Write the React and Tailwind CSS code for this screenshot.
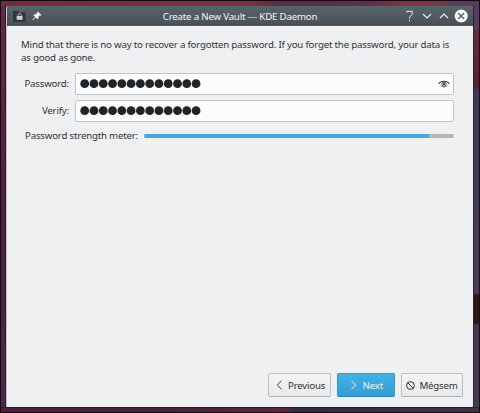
import React from 'react';

const PASSWORD_LENGTH = 13;

const PasswordDots = () => (
  <svg width="122" height="10" viewBox="0 0 122 10" fill="#202426">
    {Array.from({ length: PASSWORD_LENGTH }).map((_, i) => (
      <circle key={i} cx={4.7 + i * 9.28} cy="4.7" r="4.4" />
    ))}
  </svg>
);

const VaultIcon = () => (
  <svg width="13" height="13" viewBox="0 0 13 13">
    <path d="M0 1h5l1 1.5h6.5V12H0z" fill="#30363a" />
    <path d="M.5 1.5h5M6 3.5h5.5" stroke="#3f282e" strokeWidth="1" />
    <path d="M5 6V5a1.6 1.6 0 0 1 3.2 0v1" fill="none" stroke="#a9adaf" strokeWidth="1" />
    <rect x="3.7" y="6" width="5.8" height="3.8" fill="#d0d2d3" />
  </svg>
);

const PinIcon = () => (
  <svg width="10" height="10" viewBox="0 0 10 10">
    <path d="M5.8.7 9.2 4l-.9.4-.7-.1-1.4 1.5.1 1.6-.8.7-1.9-1.9L.7 9.1l-.2-.2 2.8-3L1.6 4.2l.7-.8 1.7.1 1.4-1.4-.1-.7z" fill="#fcfcfc" stroke="#fcfcfc" strokeWidth=".4" />
  </svg>
);

const EyeIcon = () => (
  <svg width="12" height="8" viewBox="0 0 12 8" fill="none" stroke="#303437">
    <path d="M.8 3.8C3 .3 9 .3 11.2 3.8" strokeWidth="1.1" />
    <path d="M2.5 5.4C4.5 7.4 7.5 7.4 9.5 5.4" strokeWidth=".6" />
    <circle cx="6" cy="4.2" r="2.1" strokeWidth=".8" />
    <circle cx="6" cy="4.2" r="1.1" fill="#303437" stroke="none" />
  </svg>
);

const App = () => {
  return (
    <div className="flex h-[413px] w-[480px] flex-col bg-[#160a12] font-['Noto_Sans','Open_Sans',sans-serif] text-[9.7px] leading-[13px] tracking-[-0.2px] text-[#2f3437]">
      {/* wallpaper above the window */}
      <div className="h-px shrink-0" />
      <div className="ml-px mr-px h-[5px] shrink-0 bg-[linear-gradient(90deg,#702d40_0px,#773344_250px,#572b43_285px,#63304a_375px,#7d3743_405px,#7d3743_430px,#563c5c_455px)]" />

      <div className="flex h-[401px] shrink-0">
        <div className="w-[6px] border-l border-r border-l-[#140812] border-r-[#30182a] bg-linear-to-b from-[#622b43] via-[#4d223b] to-[#4d2848]" />
        <div className="flex w-[467px] flex-col overflow-hidden rounded-t-[2px] rounded-b-[1px] border-l border-[#c9c0ca] bg-[#eff0f1]">
          <div className="flex h-[20px] shrink-0 items-center bg-linear-to-b from-[#59646a] to-[#475057] pl-[6px] pr-[5px]">
            <VaultIcon />
            <div className="ml-[6px]">
              <PinIcon />
            </div>
            <div className="flex-1 pl-[33px] text-center text-[#f4f5f5]">Create a New Vault — KDE Daemon</div>
            <svg width="63" height="14" viewBox="0 0 63 14" fill="none" stroke="#eff0f1" strokeWidth="1.1">
              <path d="M1.8 3.6V2.3h5.4v3.2L4.5 8v1.6M4.5 10.9v1.2" strokeWidth="1" />
              <path d="m18 5 4 4 4-4M35 9l4-4 4 4" />
              <circle cx="56.2" cy="7" r="6.5" fill="#fcfcfc" stroke="none" />
              <path d="m53.2 4 6 6m0-6-6 6" stroke="#465057" />
            </svg>
          </div>

          <div className="flex flex-1 flex-col border-t border-[#fafafa] pl-[14px] pr-[10px]">
            <p className="mt-[11px] whitespace-nowrap">
              Mind that there is no way to recover a forgotten password. If you forget the password, your data is
              <br />
              as good as gone.
            </p>

            <div className="mr-[9px] mt-[9px] flex h-[22px] items-center">
              <div className="w-[48px] pb-px text-right">Password:</div>
              <div className="ml-[6px] flex h-[22px] flex-1 items-center justify-between rounded-[2px] border border-[#c3c6c8] bg-[#fcfcfc] pl-[4px] pr-[3px]">
                <PasswordDots />
                <EyeIcon />
              </div>
            </div>

            <div className="mr-[9px] mt-[5px] flex h-[22px] items-center">
              <div className="w-[48px] pb-px text-right">Verify:</div>
              <div className="ml-[6px] flex h-[22px] flex-1 items-center rounded-[2px] border border-[#c3c6c8] bg-[#fcfcfc] pl-[4px]">
                <PasswordDots />
              </div>
            </div>

            <div className="mr-[9px] mt-[7px] flex h-[13px] items-start">
              <div className="w-[118px] whitespace-nowrap pl-[4px]">Password strength meter:</div>
              <div className="ml-[4.5px] mt-[4.5px] h-[4px] flex-1 overflow-hidden rounded-full bg-[#b3b5b6]">
                <div className="h-full w-[92%] bg-[#46a8db]" />
              </div>
            </div>

            <div className="mb-[10px] mt-auto flex justify-end gap-[5.5px]">
              <button className="flex h-[24px] w-[63px] items-center rounded-[2px] border border-[#bcbec0] border-b-[#adb0b2] bg-linear-to-b from-[#f3f4f4] to-[#e9eaeb] pl-[7px]">
                <svg width="7" height="10" viewBox="0 0 7 10" fill="none" stroke="#303538">
                  <path d="M5.5.8 1.3 5l4.2 4.2" />
                </svg>
                <span className="ml-[5px]">Previous</span>
              </button>
              <button className="flex h-[24px] w-[58.5px] items-center rounded-[2px] border border-[#3498cc] border-b-[#2f86b4] bg-linear-to-b from-[#42b1e6] to-[#369dd4] pl-[12.5px] text-[#e8f6fc]">
                <svg width="7" height="10" viewBox="0 0 7 10" fill="none" stroke="#e8f6fc">
                  <path d="M1.5.8 5.7 5 1.5 9.2" />
                </svg>
                <span className="ml-[5.5px]">Next</span>
              </button>
              <button className="flex h-[24px] w-[62.5px] items-center rounded-[2px] border border-[#bcbec0] border-b-[#adb0b2] bg-linear-to-b from-[#f3f4f4] to-[#e9eaeb] pl-[4.5px]">
                <svg width="9" height="9" viewBox="0 0 9 9" fill="none" stroke="#303538">
                  <circle cx="4.5" cy="4.5" r="3.9" />
                  <path d="m1.8 1.8 5.4 5.4" />
                </svg>
                <span className="ml-[4.5px]">Mégsem</span>
              </button>
            </div>
          </div>
        </div>
        <div className="w-[6px] border-l border-[#292333] bg-[linear-gradient(#563c5c_0px,#563c5c_22px,#6b2a3a_25px,#55202e_82px,#3a3b59_84px,#443b54_200px,#493c50_287px,#2d1514_289px,#2d1514_317px,#493950_319px)]" />
        <div className="w-px bg-[#140d18]" />
      </div>

      {/* wallpaper below the window */}
      <div className="ml-px mr-px h-[5px] shrink-0 border-t border-[#2a1b2b] bg-[linear-gradient(90deg,#4b213d_0px,#44233a_150px,#542b3b_285px,#302c43_292px,#40334c_480px)]" />
      <div className="h-px shrink-0" />
    </div>
  );
};

export default App;
